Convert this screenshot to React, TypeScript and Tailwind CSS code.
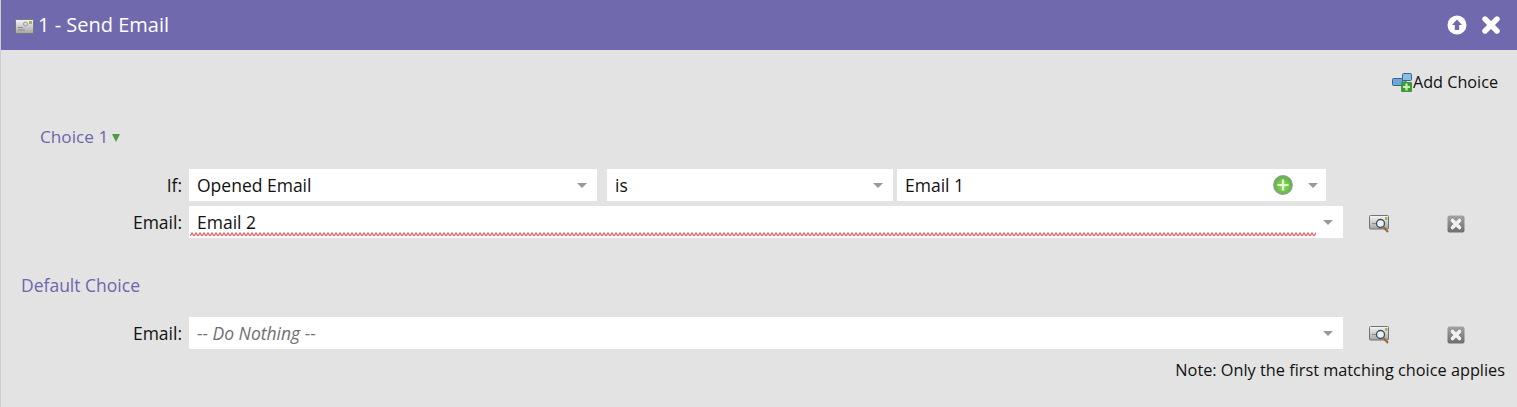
function MailIcon() {
  return (
    <svg width="19" height="15" viewBox="0 0 19 15" className="mt-[3px] shrink-0">
      <defs>
        <linearGradient id="mailFill" x1="0" y1="0" x2="0" y2="1">
          <stop offset="0" stopColor="#f6f6f6" />
          <stop offset="1" stopColor="#a4a4a4" />
        </linearGradient>
      </defs>
      <rect x="0.5" y="0.5" width="18" height="14" rx="1" fill="url(#mailFill)" stroke="#77777f" />
      <rect x="3" y="8" width="5" height="1" fill="#8a8a8a" />
      <rect x="3" y="10.5" width="7" height="1" fill="#8a8a8a" />
      <circle cx="10.5" cy="5" r="2" fill="none" stroke="#999" />
      <rect x="14" y="2" width="3" height="3" fill="#a8b54a" />
    </svg>
  );
}

function UpIcon() {
  return (
    <svg width="20" height="20" viewBox="0 0 20 20">
      <circle cx="10" cy="10" r="9.5" fill="#fff" />
      <path d="M10 4.5 L15 10 H12.2 V15 H7.8 V10 H5 Z" fill="#7069ae" />
    </svg>
  );
}

function CloseIcon() {
  return (
    <svg width="18" height="18" viewBox="0 0 18 18">
      <path d="M3 3 L15 15 M15 3 L3 15" stroke="#fff" strokeWidth="5.4" strokeLinecap="round" />
    </svg>
  );
}

function AddChoiceIcon() {
  return (
    <svg width="21" height="20" viewBox="0 0 21 20" className="shrink-0">
      <path d="M8 9 H14 V11" fill="none" stroke="#33658f" />
      <rect x="0.5" y="6.5" width="10" height="7" rx="1" fill="#6ea6d8" stroke="#33658f" />
      <rect x="10.5" y="1.5" width="9" height="7" rx="1" fill="#8bbce6" stroke="#33658f" />
      <rect x="9" y="10" width="11" height="10" rx="1" fill="#3f9a36" />
      <path d="M14.5 11.5 V18.5 M11 15 H18" stroke="#c9f0b8" strokeWidth="2.2" />
    </svg>
  );
}

function GreenPlus() {
  return (
    <svg width="20" height="20" viewBox="0 0 20 20" className="shrink-0">
      <defs>
        <radialGradient id="plusFill" cx="0.5" cy="0.55" r="0.55">
          <stop offset="0" stopColor="#8fe05c" />
          <stop offset="1" stopColor="#5bb03f" />
        </radialGradient>
      </defs>
      <circle cx="10" cy="10" r="9.2" fill="url(#plusFill)" stroke="#85a088" strokeWidth="1.4" />
      <path d="M10 4.5 V15.5 M4.5 10 H15.5" stroke="#eaf8e0" strokeWidth="2.2" />
    </svg>
  );
}

function Arrow() {
  return <span className="h-0 w-0 shrink-0 border-x-[5px] border-t-[5px] border-x-transparent border-t-[#999999]" />;
}

function Select({ text, className, muted, extra, squiggle }: { text: string; className: string; muted?: boolean; extra?: boolean; squiggle?: boolean }) {
  return (
    <div className={`relative flex h-8 items-center bg-white pl-2 ${extra ? "pr-2" : "pr-[10px]"} ${className}`}>
      <span className={`flex-1 ${muted ? "italic text-[#6f6f6f]" : "text-[#111111]"}`}>{text}</span>
      {extra && <GreenPlus />}
      {extra && <span className="w-[15px]" />}
      <Arrow />
      {squiggle && (
        <svg className="absolute bottom-px left-px h-[5px] w-[1126px]">
          <defs>
            <pattern id="wave" width="4" height="5" patternUnits="userSpaceOnUse">
              <path d="M0 4 L2 1 L4 4" fill="none" stroke="#e2545c" strokeWidth="1.2" />
            </pattern>
          </defs>
          <rect width="1126" height="5" fill="url(#wave)" />
        </svg>
      )}
    </div>
  );
}

function ViewIcon() {
  return (
    <svg width="21" height="18" viewBox="0 0 21 18" className="shrink-0">
      <defs>
        <linearGradient id="viewFill" x1="0" y1="0" x2="0" y2="1">
          <stop offset="0" stopColor="#f6f6f6" />
          <stop offset="1" stopColor="#a5a5a5" />
        </linearGradient>
      </defs>
      <rect x="0.5" y="0.5" width="19" height="13.5" rx="1" fill="url(#viewFill)" stroke="#73737a" />
      <rect x="3" y="8" width="4" height="1" fill="#888" />
      <rect x="16" y="2" width="2.5" height="3" fill="#a8b54a" />
      <circle cx="11.5" cy="8.5" r="4" fill="#eaf2f8" stroke="#44505a" strokeWidth="1.4" />
      <path d="M14.5 12 L19 17" stroke="#9a6a35" strokeWidth="2" />
    </svg>
  );
}

function DeleteIcon() {
  return (
    <svg width="18" height="18" viewBox="0 0 18 18" className="shrink-0">
      <defs>
        <linearGradient id="delFill" x1="0" y1="0" x2="0" y2="1">
          <stop offset="0" stopColor="#a2a2a2" />
          <stop offset="1" stopColor="#6d6d6d" />
        </linearGradient>
      </defs>
      <rect x="0.5" y="0.5" width="17" height="17" rx="2" fill="url(#delFill)" />
      <path d="M5.5 5.5 L12.5 12.5 M12.5 5.5 L5.5 12.5" stroke="#f2f2f2" strokeWidth="3.6" strokeLinecap="round" />
    </svg>
  );
}

function EmailRow({ text, muted, squiggle }: { text: string; muted?: boolean; squiggle?: boolean }) {
  return (
    <div className="flex h-8 items-center">
      <label className="w-[182px] text-right text-[#111111]">Email:</label>
      <Select text={text} muted={muted} squiggle={squiggle} className="ml-[7px] w-[1154px]" />
      <span className="ml-[26px] mt-[3px] flex"><ViewIcon /></span>
      <span className="ml-[57px] mt-[4px] flex"><DeleteIcon /></span>
    </div>
  );
}

export default function App() {
  return (
    <div className="flex h-[407px] flex-col overflow-hidden border-l border-[#cfcfcf] bg-[#e3e3e3] font-['Open_Sans',sans-serif] text-[17.5px]">
      <div className="flex h-[50px] shrink-0 items-center bg-[#7069ae] pl-[14px] pr-[17px] text-white">
        <MailIcon />
        <span className="ml-[4px] flex-1 text-[20px]">1 - Send Email</span>
        <UpIcon />
        <span className="ml-[15px] flex"><CloseIcon /></span>
      </div>

      <div className="flex-1 pl-px">
        <div className="mt-[22px] flex h-5 items-center justify-end pr-[19px] text-base text-[#111111]">
          <AddChoiceIcon />
          <span className="text-[16.2px]">Add Choice</span>
        </div>

        <div className="mt-[34px] flex h-[22px] items-center pl-[38px] text-[17.2px] text-[#6d66ac]">
          <span>Choice 1</span>
          <span className="ml-[4px] mt-[2px] h-0 w-0 border-x-[4.5px] border-t-[8px] border-x-transparent border-t-[#4f9a45]" />
        </div>

        <div className="mt-[21px] flex h-8 items-center">
          <label className="w-[180px] text-right text-[#111111]">If:</label>
          <Select text="Opened Email" className="ml-[7px] w-[408px]" />
          <Select text="is" className="ml-[10px] w-[286px]" />
          <Select text="Email 1" extra className="ml-[4px] w-[429px]" />
        </div>

        <div className="-ml-[2px] mt-[5px]">
          <EmailRow text="Email 2" squiggle />
        </div>

        <div className="mt-[36px] flex h-[22px] items-center pl-[19px] text-[#6d66ac]">Default Choice</div>

        <div className="-ml-[2px] mt-[21px]">
          <EmailRow text="-- Do Nothing --" muted />
        </div>

        <div className="mt-[9px] pr-3 text-right text-[16.3px] text-[#111111]">Note: Only the first matching choice applies</div>
      </div>
    </div>
  );
}
